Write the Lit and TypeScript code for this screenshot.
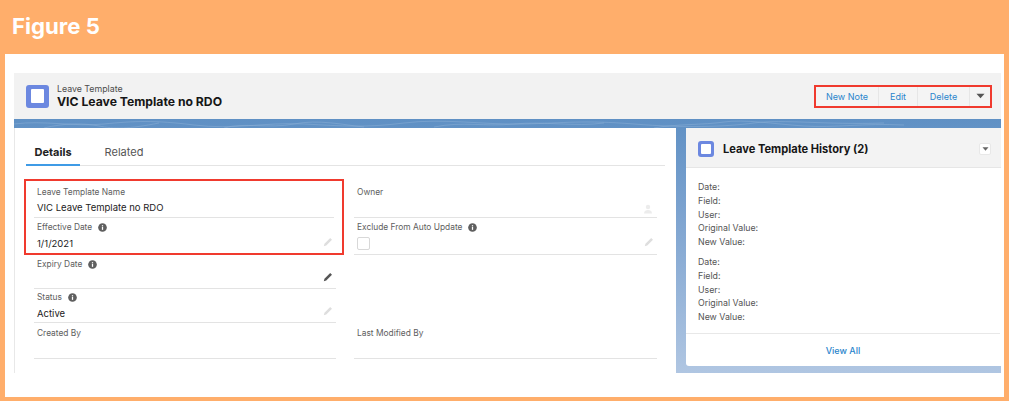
import { LitElement, html, css, svg } from 'lit';
import { customElement } from 'lit/decorators.js';

const pencil = (dark = false) => html`
  <svg class="pencil ${dark ? 'dark' : ''}" viewBox="0 0 12 12">
    <path d="M8.6 1.2l2.2 2.2-6.9 6.9-2.9.7.7-2.9z"></path>
  </svg>
`;

const info = html`
  <svg class="info" viewBox="0 0 10 10">
    <circle cx="5" cy="5" r="4.8" fill="#5f5f5f"></circle>
    <rect x="4.3" y="4.2" width="1.4" height="3.4" fill="#fff"></rect>
    <rect x="4.3" y="2.4" width="1.4" height="1.2" fill="#fff"></rect>
  </svg>
`;

const objectIcon = (size: number) => html`
  <span class="obj" style="width:${size}px;height:${size}px"><span></span></span>
`;

const caret = html`
  <svg class="caret" viewBox="0 0 10 6"><path d="M.5 .5h9L5 5.5z"></path></svg>
`;

// faint contour lines across the blue band
const contours = svg`
  <path d="M0 5c30-4 60 3 90 0s50-4 90 1 70-3 110-1 60 4 100-1 80 2 120 1 60-4 110 0 90 3 120-1 70 2 130 0"></path>
  <path d="M30 9c20-5 40-5 55-2s30 3 60-3M210 9c20-6 45 1 70-4s50 1 70 3M420 8c30-6 50 0 80-3s60 3 90-1M640 9c20-4 50-3 70-6s50 2 80 4 60-3 100-1"></path>
`;

@customElement('app-root')
export class AppRoot extends LitElement {
  static styles = css`
    :host {
      display: block;
      width: 1009px;
      height: 401px;
      overflow: hidden;
      background: #ffae6b;
      font-family: Inter, 'Liberation Sans', sans-serif;
      color: #1f1f1f;
    }

    .figure-title {
      height: 54px;
      padding-left: 12px;
      box-sizing: border-box;
      font-size: 22.2px;
      font-weight: 700;
      line-height: 52px;
      color: #fff;
    }

    .sheet {
      height: 343px;
      margin: 0 5px;
      padding: 19px 3px 0 9px;
      box-sizing: border-box;
      background: #fff;
    }

    .record-header {
      height: 46px;
      padding: 0 10px 0 12px;
      display: flex;
      align-items: center;
      justify-content: space-between;
      background: #f2f2f2;
    }

    .identity {
      display: flex;
      align-items: center;
      gap: 8px;
    }

    .obj {
      display: flex;
      align-items: center;
      justify-content: center;
      background: #6c88e0;
      border-radius: 3px;
      flex: none;
    }

    .obj span {
      width: 58%;
      height: 58%;
      background: #fff;
      border-radius: 1px;
    }

    .kind {
      font-size: 8.8px;
      line-height: 11px;
      color: #4d4d4d;
    }

    .name {
      font-size: 12.2px;
      font-weight: 700;
      line-height: 15px;
      color: #161616;
    }

    .actions {
      height: 23px;
      display: flex;
      align-items: center;
      border: 2px solid #f03a2e;
      box-sizing: border-box;
      width: 178px;
      margin-right: -1px;
      background: #f4f4f4;
    }

    .actions a {
      height: 100%;
      display: flex;
      align-items: center;
      justify-content: center;
      font-size: 9px;
      color: #2a85cc;
      border-right: 1px solid #e6e6e6;
      box-sizing: border-box;
    }

    .actions a:nth-child(1) { width: 63px; }
    .actions a:nth-child(2) { width: 39px; }
    .actions a:nth-child(3) { width: 52px; }

    .actions .more {
      flex: 1;
      display: flex;
      justify-content: center;
    }

    .caret {
      width: 9px;
      height: 6px;
      fill: #555;
    }

    .stage {
      position: relative;
      height: 254px;
      padding-top: 9px;
      box-sizing: border-box;
      display: grid;
      grid-template-columns: 662px 315px;
      column-gap: 10px;
      background: linear-gradient(#5f90c4, #7ba2cf 35%, #b0c6e2 100%);
    }

    .contours {
      position: absolute;
      left: 0;
      top: 0;
      width: 100%;
      height: 9px;
      fill: none;
      stroke: #8db0d6;
      stroke-width: 0.5;
    }

    .main {
      height: 245px;
      padding: 0 11px;
      box-sizing: border-box;
      background: #fff;
      border-left: 1px solid #e8e8e8;
    }

    .tabs {
      height: 38px;
      display: flex;
      border-bottom: 1px solid #e4e4e4;
      box-sizing: border-box;
      font-size: 11px;
    }

    .tab {
      width: 54px;
      line-height: 48px;
      height: 38px;
      text-align: center;
      color: #555;
      box-sizing: border-box;
    }

    .tab + .tab {
      margin-left: 21px;
      width: 46px;
    }

    .tab.active {
      font-weight: 700;
      color: #222;
      border-bottom: 2px solid #3f9be6;
    }

    .fields {
      margin-top: 14px;
      display: grid;
      grid-template-columns: 302px 303px;
      column-gap: 18px;
      padding-left: 8px;
    }

    .column {
      display: flex;
      flex-direction: column;
    }

    .column + .column {
      padding-top: 1px;
    }

    .marked {
      margin: -1px -8px 0 -10px;
      padding: 0 8px 0 8px;
      height: 76px;
      border: 2px solid #f03a2e;
      box-sizing: border-box;
    }

    .field {
      position: relative;
      box-sizing: border-box;
      padding: 3px 3px 0;
      border-bottom: 1px solid #e3e3e3;
    }

    .first { padding-top: 5px; }
    .first .value { margin-top: 2px; }
    .tight { padding-top: 2px; }
    .loose { padding-top: 4px; }

    .h37 { height: 37px; }
    .h34 { height: 34px; }
    .h36 { height: 36px; }
    .plain { border-bottom: none; height: 36px; }

    .label {
      display: flex;
      align-items: center;
      gap: 6px;
      font-size: 8.4px;
      line-height: 12px;
      color: #5e5e5e;
    }

    .value {
      margin-top: 3px;
      font-size: 9.5px;
      line-height: 15px;
      color: #222;
    }

    .info {
      width: 9px;
      height: 9px;
    }

    .pencil {
      position: absolute;
      right: 3px;
      bottom: 7px;
      width: 10px;
      height: 10px;
      fill: #dedede;
    }

    .plain .pencil {
      right: 1px;
      bottom: 7px;
    }

    .h34 .pencil {
      bottom: 6px;
    }

    .pencil.dark {
      fill: #555;
    }

    .person {
      position: absolute;
      right: 4px;
      bottom: 3px;
      width: 10px;
      height: 10px;
      fill: #ececec;
    }

    .check {
      display: block;
      width: 11px;
      height: 11px;
      margin-top: 4px;
      border: 1px solid #d8d8d8;
      border-radius: 2px;
    }

    .gap {
      height: 68px;
    }

    .history {
      height: 238px;
      display: flex;
      flex-direction: column;
      background: #fff;
      border-radius: 3px 0 0 3px;
    }

    .history-head {
      height: 40px;
      padding: 3px 10px 0 12px;
      box-sizing: border-box;
      display: flex;
      align-items: center;
      gap: 9px;
      background: #f3f3f3;
      border-bottom: 1px solid #e6e6e6;
      flex: none;
    }

    .history-head b {
      flex: 1;
      font-size: 11.1px;
      line-height: 15px;
      color: #161616;
    }

    .menu {
      width: 12px;
      height: 12px;
      display: flex;
      align-items: center;
      justify-content: center;
      background: #fff;
      border: 1px solid #e8e8e8;
      box-sizing: border-box;
      border-radius: 2px;
    }

    .menu .caret {
      width: 7px;
      height: 4px;
      fill: #666;
    }

    .entries {
      flex: 1;
      padding: 12px 12px 0;
      font-size: 8.8px;
      line-height: 13.8px;
      color: #555;
    }

    .entry + .entry {
      margin-top: 6px;
    }

    .view-all {
      height: 32px;
      margin-right: 1px;
      border-top: 1px solid #e8e8e8;
      display: flex;
      align-items: center;
      justify-content: center;
      font-size: 9px;
      font-weight: 500;
      color: #2a85cc;
      flex: none;
    }
  `;

  private renderEntry() {
    return html`
      <div class="entry">
        <div>Date:</div>
        <div>Field:</div>
        <div>User:</div>
        <div>Original Value:</div>
        <div>New Value:</div>
      </div>
    `;
  }

  render() {
    return html`
      <div class="figure-title">Figure 5</div>
      <div class="sheet">
        <div class="record-header">
          <div class="identity">
            ${objectIcon(23)}
            <div>
              <div class="kind">Leave Template</div>
              <div class="name">VIC Leave Template no RDO</div>
            </div>
          </div>
          <div class="actions">
            <a>New Note</a><a>Edit</a><a>Delete</a>
            <span class="more">${caret}</span>
          </div>
        </div>
        <div class="stage">
          <svg class="contours" viewBox="0 0 987 9" preserveAspectRatio="none">${contours}</svg>
          <div class="main">
            <div class="tabs">
              <div class="tab active">Details</div>
              <div class="tab">Related</div>
            </div>
            <div class="fields">
              <div class="column">
                <div class="marked">
                  <div class="field h37 first">
                    <div class="label">Leave Template Name</div>
                    <div class="value">VIC Leave Template no RDO</div>
                  </div>
                  <div class="field plain">
                    <div class="label">Effective Date ${info}</div>
                    <div class="value">1/1/2021</div>
                    ${pencil()}
                  </div>
                </div>
                <div class="field h34">
                  <div class="label">Expiry Date ${info}</div>
                  ${pencil(true)}
                </div>
                <div class="field h34 tight">
                  <div class="label">Status ${info}</div>
                  <div class="value">Active</div>
                  ${pencil()}
                </div>
                <div class="field h36 loose">
                  <div class="label">Created By</div>
                </div>
              </div>
              <div class="column">
                <div class="field h37 first">
                  <div class="label">Owner</div>
                  <svg class="person" viewBox="0 0 10 10">
                    <circle cx="5" cy="3" r="2.2"></circle>
                    <path d="M1 9.5c0-2.6 2-3.5 4-3.5s4 .9 4 3.5z"></path>
                  </svg>
                </div>
                <div class="field h37">
                  <div class="label">Exclude From Auto Update ${info}</div>
                  <span class="check"></span>
                  ${pencil()}
                </div>
                <div class="gap"></div>
                <div class="field h36 loose">
                  <div class="label">Last Modified By</div>
                </div>
              </div>
            </div>
          </div>
          <div class="history">
            <div class="history-head">
              ${objectIcon(16)}
              <b>Leave Template History (2)</b>
              <span class="menu">${caret}</span>
            </div>
            <div class="entries">
              ${this.renderEntry()}
              ${this.renderEntry()}
            </div>
            <div class="view-all">View All</div>
          </div>
        </div>
      </div>
    `;
  }
}
